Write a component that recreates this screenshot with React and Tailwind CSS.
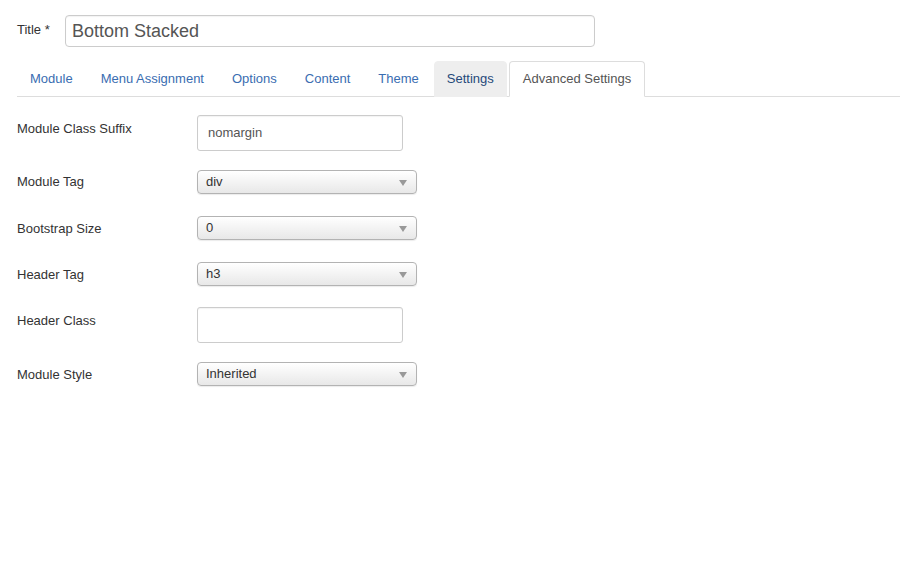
import React from "react";

const font = { fontFamily: '"Liberation Sans", Arial, sans-serif' };

function Select({ value }) {
  return (
    <div className="relative w-[220px] h-[24px] rounded-[4px] border border-[#b3b3b3] bg-gradient-to-b from-white to-[#e8e8e8] shadow-[0_1px_1px_rgba(0,0,0,0.08)] flex items-center pl-[8px] text-[13px] text-[#333]">
      <span>{value}</span>
      <span className="absolute right-[9px] top-[9px] w-0 h-0 border-l-[4px] border-r-[4px] border-t-[6px] border-l-transparent border-r-transparent border-t-[#999]" />
    </div>
  );
}

function Input({ value }) {
  return (
    <div className="w-[206px] h-[36px] rounded-[3px] border border-[#ccc] shadow-[inset_0_1px_1px_rgba(0,0,0,0.05)] bg-white flex items-center pl-[10px] text-[13px] text-[#555]">
      {value}
    </div>
  );
}

function Row({ label, children, mb, pt }) {
  return (
    <div className="flex" style={{ marginBottom: mb }}>
      <div className="w-[180px] text-[13px] leading-[18px] text-[#333]" style={{ paddingTop: pt }}>
        {label}
      </div>
      {children}
    </div>
  );
}

export default function App() {
  const tabs = ["Module", "Menu Assignment", "Options", "Content", "Theme"];
  return (
    <div className="w-[900px] h-[584px] bg-white overflow-hidden" style={font}>
      <div className="pl-[17px] pt-[15px]">
        <div className="flex items-center">
          <div className="w-[48px] text-[13px] text-[#333] -mt-[2px]">Title *</div>
          <div className="w-[530px] h-[32px] rounded-[4px] border border-[#ccc] shadow-[inset_0_1px_1px_rgba(0,0,0,0.05)] flex items-center pl-[6px] text-[18px] text-[#555]">
            Bottom Stacked
          </div>
        </div>
        <div className="mt-[13px] flex items-end border-b border-[#ddd] h-[37px]">
          {tabs.map((t) => (
            <div
              key={t}
              className="mr-[2px] -mb-px px-[12px] h-[36px] border border-transparent flex items-center text-[13px] text-[#3a6db1]"
            >
              {t}
            </div>
          ))}
          <div className="mr-[2px] -mb-px px-[12px] h-[36px] border border-[#eee] bg-[#eee] rounded-t-[4px] flex items-center text-[13px] text-[#26497a]">
            Settings
          </div>
          <div className="-mb-px px-[13px] h-[36px] border border-[#ddd] border-b-white bg-white rounded-t-[4px] flex items-center text-[13px] text-[#555]">
            Advanced Settings
          </div>
        </div>
        <div className="mt-[18px]">
          <Row label="Module Class Suffix" mb={19} pt={5}>
            <Input value="nomargin" />
          </Row>
          <Row label="Module Tag" mb={22} pt={3}>
            <Select value="div" />
          </Row>
          <Row label="Bootstrap Size" mb={22} pt={4}>
            <Select value="0" />
          </Row>
          <Row label="Header Tag" mb={21} pt={4}>
            <Select value="h3" />
          </Row>
          <Row label="Header Class" mb={19} pt={5}>
            <Input value="" />
          </Row>
          <Row label="Module Style" mb={0} pt={4}>
            <Select value="Inherited" />
          </Row>
        </div>
      </div>
    </div>
  );
}
